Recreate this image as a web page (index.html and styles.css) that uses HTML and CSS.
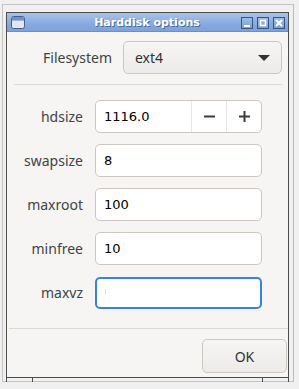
FILE: index.html
```html
<!DOCTYPE html>
<html lang="en">
<head>
  <meta charset="UTF-8" />
  <title>Harddisk options</title>
  <link rel="stylesheet" href="styles.css">
</head>
<body>
  <div class="backwin">
    <div class="dialog">
      <div class="titlebar">
        <div class="tb-side">
          <svg class="app-icon" width="14" height="13" viewBox="0 0 14 13">
            <rect x="0.5" y="0.5" width="13" height="12" rx="2" fill="#e4e6ea" stroke="#3d5f94"/>
            <rect x="1" y="1" width="12" height="3" fill="#6f93c9"/>
            <rect x="1" y="4" width="12" height="1" fill="#9bb4d8"/>
          </svg>
        </div>
        <span class="title">Harddisk options</span>
        <div class="tb-side wm-buttons">
          <span class="wm-btn"><svg width="10" height="10" viewBox="0 0 10 10"><rect x="2" y="7" width="6" height="2" fill="#fff"/></svg></span>
          <span class="wm-btn"><svg width="10" height="10" viewBox="0 0 10 10"><rect x="2.5" y="2.5" width="5" height="5" fill="none" stroke="#fff" stroke-width="1.6"/></svg></span>
          <span class="wm-btn"><svg width="10" height="10" viewBox="0 0 10 10"><path d="M2 2L8 8M8 2L2 8" stroke="#fff" stroke-width="2"/></svg></span>
        </div>
      </div>

      <div class="content">
        <div class="fs-row">
          <span class="label">Filesystem</span>
          <div class="combo">
            <span>ext4</span>
            <svg width="12" height="7" viewBox="0 0 12 7"><path d="M0 0H12L6 6Z" fill="#2e3436"/></svg>
          </div>
        </div>

        <div class="sep"></div>

        <div class="form">
          <span class="label">hdsize</span>
          <div class="field spin">
            <span class="value">1116.0</span>
            <span class="spin-btn"><svg width="11" height="11" viewBox="0 0 11 11"><rect x="0" y="4.5" width="11" height="2" fill="#3b3b3b"/></svg></span>
            <span class="spin-btn"><svg width="11" height="11" viewBox="0 0 11 11"><rect x="0" y="4.5" width="11" height="2" fill="#3b3b3b"/><rect x="4.5" y="0" width="2" height="11" fill="#3b3b3b"/></svg></span>
          </div>

          <span class="label">swapsize</span>
          <div class="field"><span class="value">8</span></div>

          <span class="label">maxroot</span>
          <div class="field"><span class="value">100</span></div>

          <span class="label">minfree</span>
          <div class="field"><span class="value">10</span></div>

          <span class="label">maxvz</span>
          <div class="field focus"><span class="caret"></span></div>
        </div>

        <div class="sep sep-bottom"></div>

        <div class="actions">
          <button class="btn">OK</button>
        </div>
      </div>
    </div>
    <div class="strip">
      <span class="tick"></span>
      <span class="tick"></span>
    </div>
  </div>
</body>
</html>
```

FILE: styles.css
```css
/* === Base === */
body{
  margin:0;
  width:299px;
  height:389px;
  background:#f0f0f0;
  padding:4px 0 0 2px;
  box-sizing:border-box;
  font-family:"Noto Sans",sans-serif;
}

/* === Window behind === */
.backwin{
  width:292px;
  height:378px;
  border:1px solid #c4c4c4;
  border-right:1px solid #bdbdbd;
  box-sizing:border-box;
  padding:7px 0 0 3px;
  background:#f0f0f0;
}

/* === Dialog frame === */
.dialog{
  width:283px;
  height:366px;
  border:1px solid #4d4d4d;
  box-sizing:border-box;
  background:#f6f5f4;
  display:flex;
  flex-direction:column;
}
.titlebar{
  height:19px;
  flex:none;
  display:flex;
  align-items:center;
  padding:0 3px 0 4px;
  background:linear-gradient(#a8c3ea,#87abdf 60%,#7fa2d6);
  border-bottom:1px solid #6d8fc3;
  box-sizing:border-box;
}
.tb-side{width:46px;flex:none;display:flex}
.app-icon{flex:none;margin-top:1px}
.title{
  flex:1;
  text-align:center;
  color:#fff;
  font:bold 11px "DejaVu Sans",sans-serif;
  text-shadow:1px 1px 0 #4a6a9c;
  white-space:nowrap;
  margin-right:2px;
}
.wm-buttons{gap:4px;margin-top:1px;justify-content:flex-end}
.wm-btn{
  width:12px;height:12px;
  box-sizing:border-box;
  border:1px solid #36558a;
  background:linear-gradient(#9dbce6,#7e9fd3);
  display:flex;align-items:center;justify-content:center;
}

/* === Content === */
.content{
  flex:1;
  display:flex;
  flex-direction:column;
  padding-top:9px;
}
.label{
  font-size:14px;
  color:#404345;
  text-align:right;
  line-height:33px;
}
.fs-row{
  display:flex;
  justify-content:flex-end;
  align-items:center;
  gap:11px;
  padding-right:6px;
}
.combo{
  width:159px;
  height:33px;
  box-sizing:border-box;
  border:1px solid #cdc7c2;
  border-radius:5px;
  background:linear-gradient(#f6f5f4,#edebe9);
  display:flex;
  align-items:center;
  justify-content:space-between;
  padding:0 11px 0 11px;
  font-size:14px;
  color:#2e3436;
}
.combo svg{margin-top:1px}

.sep{height:1px;background:#dcdad7;margin:10px 5px 0 7px}
.sep-bottom{margin:19px 0 0 2px}

/* === Form grid === */
.form{
  display:grid;
  grid-template-columns:76px 167px;
  grid-auto-rows:33px;
  column-gap:12px;
  row-gap:11px;
  margin-top:15px;
}
.field{
  border:1px solid #cdc7c2;
  border-radius:5px;
  background:#fff;
  box-sizing:border-box;
  display:flex;
  align-items:center;
  padding-left:8px;
}
.value{
  font:13px "DejaVu Sans",sans-serif;
  color:#000;
  flex:1;
}
.spin-btn{
  width:35px;
  height:100%;
  border-left:1px solid #ebe5e2;
  box-sizing:border-box;
  display:flex;
  align-items:center;
  justify-content:center;
}
.focus{
  border:2px solid #3584e4;
  margin-top:1px;
}
.caret{width:1px;height:5px;background:#cfe3f8;margin-top:-3px}

/* === Buttons === */
.actions{display:flex;justify-content:flex-end;padding:10px 1px 0 0}
.btn{
  width:85px;
  height:34px;
  border:1px solid #cdc7c2;
  border-radius:5px;
  background:linear-gradient(#f6f5f4,#edebe9);
  font:14px "Noto Sans",sans-serif;
  color:#2e3436;
  padding:0;
}

/* === Strip under dialog === */
.strip{
  width:283px;
  height:4px;
  border-left:1px solid #4d4d4d;
  border-right:1px solid #4d4d4d;
  box-sizing:border-box;
  display:flex;
  justify-content:space-between;
  padding:0 25px 0 25px;
}
.tick{width:1px;background:#4d4d4d}
```
